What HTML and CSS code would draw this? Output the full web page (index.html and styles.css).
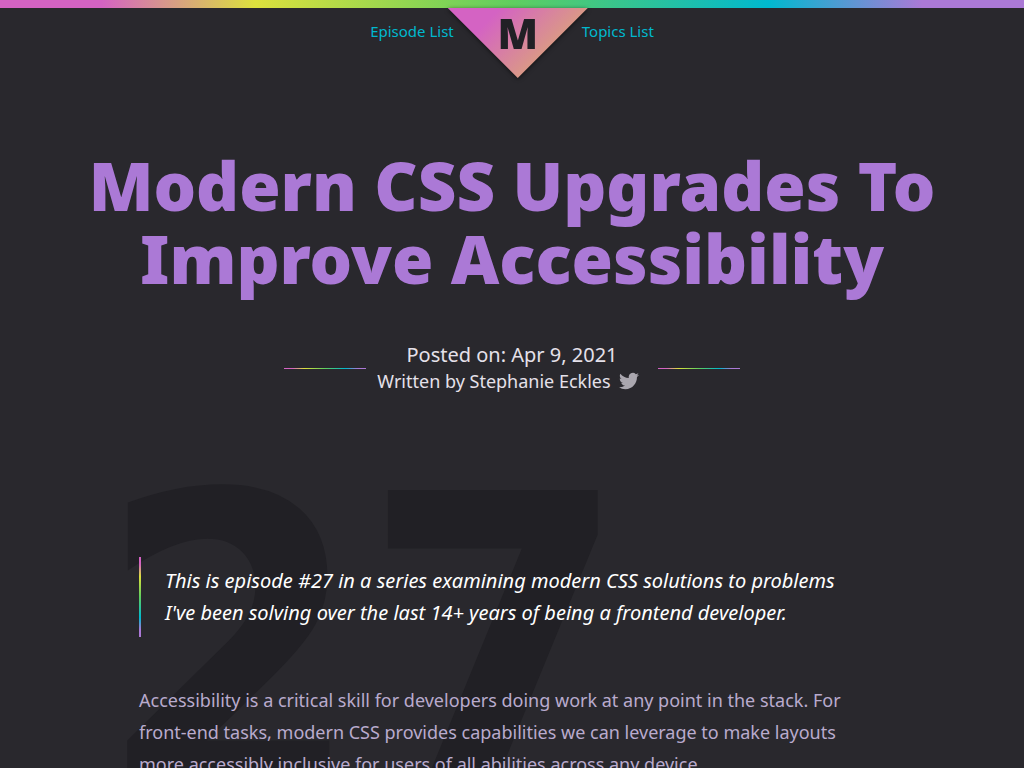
FILE: index.html
```html
<!DOCTYPE html>
<html lang="en">
<head>
<meta charset="utf-8">
<meta name="viewport" content="width=device-width, initial-scale=1">
<title>Modern CSS Upgrades To Improve Accessibility</title>
<link rel="stylesheet" href="styles.css">
</head>
<body>
<header class="site-header">
  <nav class="site-nav" aria-label="Main">
    <a class="nav-link" href="#episodes">Episode List</a>
    <a class="logo" href="#home"><span class="logo-shape">M</span></a>
    <a class="nav-link" href="#topics">Topics List</a>
  </nav>
</header>
<main>
  <div class="hero">
    <h1 class="title">Modern CSS Upgrades To Improve Accessibility</h1>
    <div class="meta">
      <span class="rule"></span>
      <div class="meta-text">
        <time class="date" datetime="2021-04-09">Posted on: Apr 9, 2021</time>
        <div class="author">
          <span>Written by Stephanie Eckles</span>
          <a class="twitter" href="#twitter" aria-label="Twitter">
            <svg viewBox="0 0 24 24" width="20" height="20" aria-hidden="true"><path fill="currentColor" d="M23.954 4.569a10 10 0 0 1-2.825.775 4.958 4.958 0 0 0 2.163-2.723c-.951.555-2.005.959-3.127 1.184a4.92 4.92 0 0 0-8.384 4.482C7.691 8.094 4.066 6.13 1.64 3.161a4.822 4.822 0 0 0-.666 2.475c0 1.71.87 3.213 2.188 4.096a4.904 4.904 0 0 1-2.228-.616v.061a4.923 4.923 0 0 0 3.946 4.827 4.996 4.996 0 0 1-2.212.085 4.937 4.937 0 0 0 4.604 3.417 9.868 9.868 0 0 1-6.102 2.105c-.39 0-.779-.023-1.17-.067a13.995 13.995 0 0 0 7.557 2.209c9.054 0 13.999-7.496 13.999-13.986 0-.209 0-.42-.015-.63a9.936 9.936 0 0 0 2.46-2.548z"/></svg>
          </a>
        </div>
      </div>
      <span class="rule"></span>
    </div>
  </div>
  <article class="article">
    <span class="episode-number" aria-hidden="true">27</span>
    <blockquote class="intro">This is episode #27 in a series examining modern CSS solutions to problems I've been solving over the last 14+ years of being a frontend developer.</blockquote>
    <p class="paragraph">Accessibility is a critical skill for developers doing work at any point in the stack. For front-end tasks, modern CSS provides capabilities we can leverage to make layouts more accessibly inclusive for users of all abilities across any device.</p>
  </article>
</main>
</body>
</html>
```
FILE: styles.css
```css
:root {
  --rainbow: #d463c3 10%, #dce13d 25%, #5fce5f 50%, #00b9cf 75%, #ab79d6 90%;
  --bg: #29282d;
  --dark: #212025;
  --purple: #ab79d6;
}

* {
  box-sizing: border-box;
}

body {
  margin: 0;
  background: var(--bg);
  color: #e5e1ea;
  font-family: "Noto Sans", "Open Sans", sans-serif;
  overflow-x: hidden;
}

.site-header {
  border-top: 8px solid;
  border-image: linear-gradient(90deg, var(--rainbow)) 1;
  border-image-width: 8px 0 0;
}

.site-nav {
  display: flex;
  justify-content: center;
  align-items: flex-start;
}

.nav-link {
  padding-top: 11px;
  color: #00b9cf;
  font-size: 15px;
  line-height: 24px;
  text-decoration: none;
}

.logo {
  margin: 0 -6px;
  text-decoration: none;
  filter: drop-shadow(0 1px 2px #0009);
}

.logo-shape {
  display: block;
  width: 140px;
  height: 70px;
  background: linear-gradient(135deg, #d463c3 25%, #dba27c 75%);
  clip-path: polygon(0 0, 100% 0, 50% 100%);
  color: var(--dark);
  font-size: 42px;
  font-weight: 900;
  line-height: 50px;
  text-align: center;
}

.hero {
  display: flex;
  flex-direction: column;
  align-items: center;
  gap: 47px;
  padding: 71px 56px 0;
}

.title {
  max-width: 912px;
  margin: 0;
  color: var(--purple);
  font-size: 67px;
  font-weight: 900;
  line-height: 73px;
  text-align: center;
}

.meta {
  display: flex;
  align-items: center;
  gap: 10px;
}

.rule {
  width: 82px;
  height: 2px;
  background: linear-gradient(90deg, var(--rainbow)) bottom / 100% 1px no-repeat;
}

.meta-text {
  display: flex;
  flex-direction: column;
  align-items: center;
  min-width: 272px;
}

.date {
  font-size: 20px;
  line-height: 26px;
}

.author {
  display: flex;
  align-items: center;
  gap: 8px;
  padding-right: 8px;
  font-size: 18px;
  line-height: 26px;
}

.twitter {
  display: flex;
  color: #aaa7af;
}

.article {
  position: relative;
  max-width: 794px;
  margin: 0 auto;
  padding: 163px 24px 32px;
}

.episode-number {
  position: absolute;
  top: 46px;
  left: -18px;
  z-index: -1;
  color: var(--dark);
  font-family: "DejaVu Sans Condensed", "DejaVu Sans", sans-serif;
  font-size: 424px;
  font-weight: 700;
  line-height: 1;
}

.intro {
  margin: 0 0 47px;
  padding: 8px 24px;
  border-left: 2px solid;
  border-image: linear-gradient(var(--rainbow)) 1;
  color: #fff;
  font-size: 20px;
  font-style: italic;
  line-height: 32px;
}

.paragraph {
  margin: 0;
  color: #b9abcd;
  font-size: 18px;
  line-height: 32px;
}
```
